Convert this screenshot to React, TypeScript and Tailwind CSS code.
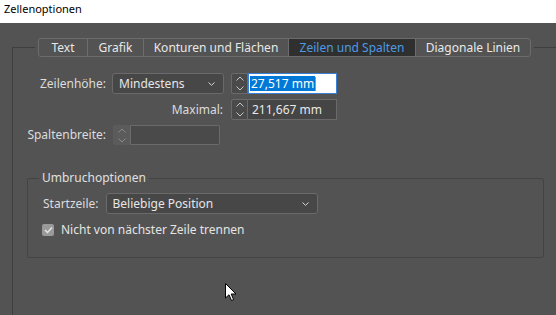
import type { ReactNode } from 'react';

const TABS = [
  { label: 'Text', w: 'w-[48px]' },
  { label: 'Grafik', w: 'w-[56px]' },
  { label: 'Konturen und Flächen', w: 'w-[145px]' },
  { label: 'Zeilen und Spalten', w: 'w-[127px]', active: true },
  { label: 'Diagonale Linien', w: 'w-[115px]' },
];

function Chevron({ up = false, className = '' }: { up?: boolean; className?: string }) {
  return (
    <svg width="8" height="5" viewBox="0 0 8 5" className={className}>
      <path
        d={up ? 'M0.5 4.5 L4 1 L7.5 4.5' : 'M0.5 0.5 L4 4 L7.5 0.5'}
        fill="none"
        stroke="currentColor"
        strokeWidth="1"
      />
    </svg>
  );
}

function Spinner({ disabled = false }: { disabled?: boolean }) {
  return (
    <div
      className={`w-[17px] h-full flex flex-col items-center justify-center gap-[5px] border rounded-l-[2px] ${
        disabled
          ? 'bg-[#5b5b5b] border-[#5b5b5b] text-[#8a8a8a]'
          : 'bg-[#4a4a4a] border-[#6a6a6a] text-[#c8c8c8]'
      }`}
    >
      <Chevron up />
      <Chevron />
    </div>
  );
}

function Select({ value, w }: { value: string; w: string }) {
  return (
    <div
      className={`${w} h-full flex items-center justify-between pl-[6px] pr-[8px] bg-[#474747] border border-[#6a6a6a] rounded-[3px] text-[#e6e6e6]`}
    >
      <span>{value}</span>
      <svg width="7" height="4" viewBox="0 0 7 4">
        <path d="M0.5 0.5 L3.5 3.3 L6.5 0.5" fill="none" stroke="#d6d6d6" strokeWidth="1" />
      </svg>
    </div>
  );
}

function Row({ label, labelW, children, h }: { label: string; labelW: string; children: ReactNode; h: string }) {
  return (
    <div className={`flex items-center ${h}`}>
      <span className={`${labelW} text-right shrink-0`}>{label}</span>
      {children}
    </div>
  );
}

export default function App() {
  return (
    <div
      className="w-[556px] h-[315px] overflow-hidden bg-[#535353] text-[12px] text-[#dcdcdc] relative"
      style={{ fontFamily: '"Noto Sans", "Open Sans", sans-serif' }}
    >
      <div className="h-[23px] bg-white text-black pl-[4px] text-[11px] leading-[17px]">Zellenoptionen</div>

      <fieldset className="mt-[15px] ml-[12px] w-[600px] h-[400px] border border-[#3e3e3e]">
        <legend className="ml-[22px] px-[3px]">
          <div className="flex h-[19px] border border-[#6c6c6c] rounded-[3px] bg-[#535353] overflow-hidden">
            {TABS.map((t, i) => (
              <div
                key={t.label}
                className={`${t.w} flex items-center justify-center leading-none ${i > 0 ? 'border-l border-[#6c6c6c]' : ''} ${
                  t.active ? 'bg-[#2f2f2f] text-[#4d9ae3]' : 'text-[#e8e8e8]'
                }`}
              >
                {t.label}
              </div>
            ))}
          </div>
        </legend>

        <div className="flex flex-col pt-[16px]">
          <Row label="Zeilenhöhe:" labelW="w-[93px]" h="h-[21px]">
            <div className="ml-[6px] h-full">
              <Select value="Mindestens" w="w-[112px]" />
            </div>
            <div className="ml-[7px] h-full flex">
              <Spinner />
              <div className="w-[89px] h-full bg-white border border-[#3a7fd6] flex items-center pl-[1px]">
                <span className="bg-[#0078d7] text-white leading-[15px] px-[1px]">27,517 mm</span>
                <span className="w-[1px] h-[14px] bg-[#e08a2c]" />
              </div>
            </div>
          </Row>

          <Row label="Maximal:" labelW="w-[210px]" h="h-[21px] mt-[5px]">
            <div className="ml-[8px] h-full flex">
              <Spinner />
              <div className="w-[89px] h-full bg-[#454545] border border-[#6a6a6a] border-l-0 flex items-center pl-[4px] text-[#e8e8e8]">
                211,667 mm
              </div>
            </div>
          </Row>

          <Row label="Spaltenbreite:" labelW="w-[93px]" h="h-[20px] mt-[5px]">
            <div className="ml-[7px] h-full flex">
              <Spinner disabled />
              <div className="w-[90px] h-full bg-[#4a4a4a] border border-[#6a6a6a] rounded-r-[2px]" />
            </div>
          </Row>

          <fieldset className="mt-[24px] ml-[14px] w-[517px] h-[89px] border border-[#444444] rounded-[2px]">
            <legend className="ml-[11px] px-[3px] text-[#e0e0e0]">Umbruchoptionen</legend>
            <div className="flex items-center h-[21px] mt-[6px] pl-[15px]">
              <span>Startzeile:</span>
              <div className="ml-[7px] h-full">
                <Select value="Beliebige Position" w="w-[212px]" />
              </div>
            </div>
            <div className="flex items-center mt-[7px] pl-[14px] gap-[7px]">
              <div className="w-[12px] h-[12px] rounded-[2px] bg-[#9a9a9a] flex items-center justify-center">
                <svg width="9" height="8" viewBox="0 0 9 8">
                  <path d="M1 4 L3.5 6.5 L8 1.5" fill="none" stroke="#e6e6e6" strokeWidth="1.5" />
                </svg>
              </div>
              <span className="text-[#e4e4e4]">Nicht von nächster Zeile trennen</span>
            </div>
          </fieldset>
        </div>
      </fieldset>

      <svg className="absolute left-[225px] top-[283px]" width="13" height="19" viewBox="0 0 13 19">
        <path d="M0.5 0.5 L0.5 15 L4 11.8 L6.5 17.5 L8.6 16.6 L6.2 11 L11 11 Z" fill="#fff" stroke="#000" strokeWidth="1" />
      </svg>
    </div>
  );
}
